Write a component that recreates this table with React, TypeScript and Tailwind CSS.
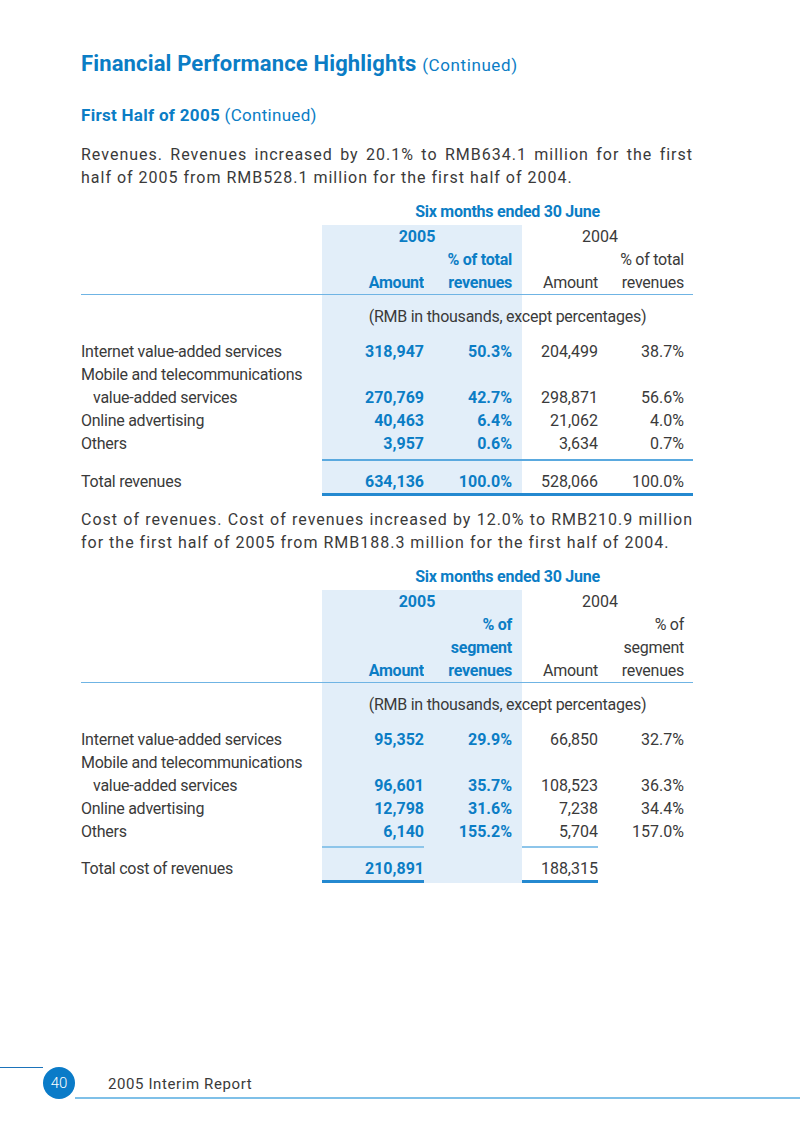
import React from "react";

const SHADE = "bg-[#e2eef9]";
const BLUE = "text-[#0b7dc5]";
const FONT = { fontFamily: "Roboto, 'Liberation Sans', Arial, sans-serif" };

type Vals = [string, string, string, string];

// one line of the table: label + four value cells
function Row({ label, v, indent, head }: { label?: string; v: Vals; indent?: boolean; head?: boolean }) {
    const cell = `flex items-center justify-end ${head ? "" : "tracking-normal"}`;
    return (
        <div className="flex h-[23px]">
            <div className={`w-[241px] flex items-center ${indent ? "pl-[12px]" : ""}`}>{label}</div>
            <div className={`w-[102px] ${SHADE} ${cell} font-bold ${BLUE}`}>{v[0]}</div>
            <div className={`w-[98px] pr-[10px] ${SHADE} ${cell} font-bold ${BLUE}`}>{v[1]}</div>
            <div className={`w-[76px] ${cell}`}>{v[2]}</div>
            <div className={`w-[95px] pr-[9px] ${cell}`}>{v[3]}</div>
        </div>
    );
}

// spacer row that keeps the 2005 shading, with optional rules under the value cells
function Gap({ h, rule }: { h: string; rule?: "span" | "amounts" | "thickSpan" | "thickAmounts" | "head" }) {
    const thin = "border-b-2 border-[#5aa9df]";
    const soft = "border-b-2 border-[#8dc5ea]";
    const thick = "border-b-[3px] border-[#2489d0]";
    let a5 = "", p5 = "", a4 = "", p4 = "", lab = "";
    if (rule === "span") { a5 = p5 = a4 = p4 = thin; }
    if (rule === "amounts") { a5 = a4 = soft; }
    if (rule === "thickSpan") { a5 = p5 = a4 = p4 = thick; }
    if (rule === "thickAmounts") { a5 = a4 = thick; }
    if (rule === "head") { lab = a5 = p5 = a4 = p4 = "border-b border-[#6fb4e4]"; }
    return (
        <div className={`flex ${h}`}>
            <div className={`w-[241px] ${lab}`} />
            <div className={`w-[102px] ${SHADE} ${a5}`} />
            <div className={`w-[98px] ${SHADE} ${p5}`} />
            <div className={`w-[76px] ${a4}`} />
            <div className={`w-[95px] ${p4}`} />
        </div>
    );
}

function YearHeader() {
    return (
        <>
            <div className={`flex h-[23px] pl-[241px] font-bold ${BLUE}`}>
                <div className="w-[371px] flex items-center justify-center">Six months ended 30 June</div>
            </div>
            <div className="flex h-[23px] mt-[2px]">
                <div className="w-[241px]" />
                <div className={`w-[200px] pr-[10px] ${SHADE} flex items-center justify-center font-bold tracking-normal ${BLUE}`}>2005</div>
                <div className="w-[171px] pr-[15px] flex items-center justify-center tracking-normal">2004</div>
            </div>
        </>
    );
}

function RmbRow() {
    return (
        <div className="flex h-[23px]">
            <div className="w-[241px]" />
            <div className="w-[371px] relative flex">
                <div className={`w-[200px] ${SHADE}`} />
                <div className="absolute inset-0 flex items-center justify-center">(RMB in thousands, except percentages)</div>
            </div>
        </div>
    );
}

function RevenueTable() {
    return (
        <div className="text-[16px] tracking-[-0.25px] text-[#3a3a3a]">
            <YearHeader />
            <Row head v={["", "% of total", "", "% of total"]} />
            <Row head v={["Amount", "revenues", "Amount", "revenues"]} />
            <Gap h="h-[1px]" rule="head" />
            <Gap h="h-[10px]" />
            <RmbRow />
            <Gap h="h-[12px]" />
            <Row label="Internet value-added services" v={["318,947", "50.3%", "204,499", "38.7%"]} />
            <Row label="Mobile and telecommunications" v={["", "", "", ""]} />
            <Row label="value-added services" indent v={["270,769", "42.7%", "298,871", "56.6%"]} />
            <Row label="Online advertising" v={["40,463", "6.4%", "21,062", "4.0%"]} />
            <Row label="Others" v={["3,957", "0.6%", "3,634", "0.7%"]} />
            <Gap h="h-[6px]" rule="span" />
            <Gap h="h-[9px]" />
            <Row label="Total revenues" v={["634,136", "100.0%", "528,066", "100.0%"]} />
            <Gap h="h-[3px]" rule="thickSpan" />
        </div>
    );
}

function CostTable() {
    return (
        <div className="text-[16px] tracking-[-0.25px] text-[#3a3a3a]">
            <YearHeader />
            <Row head v={["", "% of", "", "% of"]} />
            <Row head v={["", "segment", "", "segment"]} />
            <Row head v={["Amount", "revenues", "Amount", "revenues"]} />
            <Gap h="h-[1px]" rule="head" />
            <Gap h="h-[10px]" />
            <RmbRow />
            <Gap h="h-[12px]" />
            <Row label="Internet value-added services" v={["95,352", "29.9%", "66,850", "32.7%"]} />
            <Row label="Mobile and telecommunications" v={["", "", "", ""]} />
            <Row label="value-added services" indent v={["96,601", "35.7%", "108,523", "36.3%"]} />
            <Row label="Online advertising" v={["12,798", "31.6%", "7,238", "34.4%"]} />
            <Row label="Others" v={["6,140", "155.2%", "5,704", "157.0%"]} />
            <Gap h="h-[5px]" rule="amounts" />
            <Gap h="h-[9px]" />
            <Row label="Total cost of revenues" v={["210,891", "", "188,315", ""]} />
            <Gap h="h-[3px]" rule="thickAmounts" />
        </div>
    );
}

// two-line paragraph: first line stretched to the full measure like the print layout
function Para({ first, second }: { first: string; second: string }) {
    return (
        <div className="text-[16px] leading-[23px] tracking-[1px] text-[#3a3a3a]">
            <div className="whitespace-nowrap text-justify [text-align-last:justify]">{first}</div>
            <div>{second}</div>
        </div>
    );
}

export default function App() {
    return (
        <div className="w-[800px] min-h-[1136px] bg-white flex flex-col" style={FONT}>
            <div className="w-[612px] ml-[81px] pt-[51px]">
                <h1 className={`text-[22px] leading-[26px] font-bold tracking-[0.15px] ${BLUE}`}>
                    Financial Performance Highlights{" "}
                    <span className="text-[17px] font-normal tracking-[0.6px]">(Continued)</span>
                </h1>

                <h2 className={`mt-[27px] text-[17px] leading-[20px] font-bold tracking-[0.3px] ${BLUE}`}>
                    First Half of 2005 <span className="font-normal">(Continued)</span>
                </h2>

                <div className="mt-[18px]">
                    <Para
                        first="Revenues. Revenues increased by 20.1% to RMB634.1 million for the first"
                        second="half of 2005 from RMB528.1 million for the first half of 2004."
                    />
                </div>

                <div className="mt-[11px]">
                    <RevenueTable />
                </div>

                <div className="mt-[12px]">
                    <Para
                        first="Cost of revenues. Cost of revenues increased by 12.0% to RMB210.9 million"
                        second="for the first half of 2005 from RMB188.3 million for the first half of 2004."
                    />
                </div>

                <div className="mt-[11px]">
                    <CostTable />
                </div>
            </div>

            {/* page footer */}
            <div className="mt-auto mb-[37px] flex items-stretch h-[32px]">
                <div className="w-[43px] border-t border-[#1b73ba]" />
                <div className="w-[32px] h-[32px] rounded-full bg-[#0a7bc8] flex items-center justify-center text-white text-[15px] font-light">40</div>
                <div className="flex-1 border-b-2 border-[#7fc0e8] flex items-center pt-[5px] pl-[33px] text-[15px] tracking-[0.6px] text-[#3a3a3a]">
                    2005 Interim Report
                </div>
            </div>
        </div>
    );
}
